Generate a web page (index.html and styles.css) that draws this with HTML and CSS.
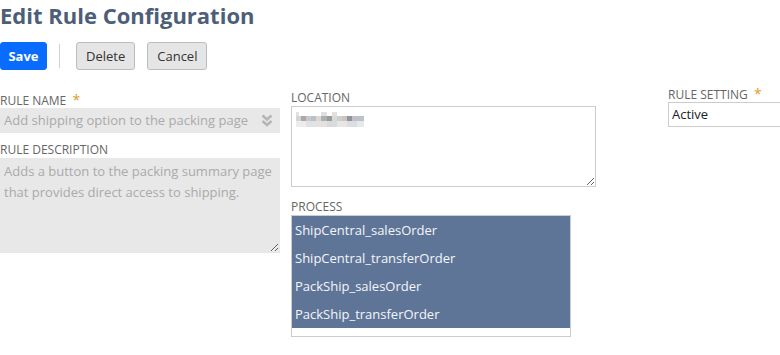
FILE: index.html
```html
<!DOCTYPE html>
<html>
<head>
<meta charset="utf-8">
<link rel="stylesheet" href="styles.css">
</head>
<body>
<h1 class="title">Edit Rule Configuration</h1>
<div class="toolbar">
  <button class="btn btn-primary">Save</button>
  <span class="sep"></span>
  <button class="btn">Delete</button>
  <button class="btn">Cancel</button>
</div>
<div class="form">
  <div class="col col1">
    <label class="lbl">RULE NAME <span class="req">*</span></label>
    <div class="input disabled">
      <span>Add shipping option to the packing page</span>
      <svg class="chev" width="12" height="13" viewBox="0 0 12 13"><path d="M1.5 1.5 L6 5.5 L10.5 1.5 M1.5 7 L6 11 L10.5 7" fill="none" stroke="#b5b5b5" stroke-width="2.6"/></svg>
    </div>
    <label class="lbl lbl-gap">RULE DESCRIPTION</label>
    <textarea class="textarea disabled" readonly>Adds a button to the packing summary page that provides direct access to shipping.</textarea>
  </div>
  <div class="col col2">
    <label class="lbl">LOCATION</label>
    <div class="loc">
      <span class="blur"></span>
    </div>
    <label class="lbl lbl-gap2">PROCESS</label>
    <div class="list">
      <div class="opt">ShipCentral_salesOrder</div>
      <div class="opt">ShipCentral_transferOrder</div>
      <div class="opt">PackShip_salesOrder</div>
      <div class="opt">PackShip_transferOrder</div>
    </div>
  </div>
  <div class="col col3">
    <label class="lbl">RULE SETTING <span class="req">*</span></label>
    <div class="input setting">Active</div>
  </div>
</div>
</body>
</html>
```
FILE: styles.css
```css
* { box-sizing: border-box; }
html, body { margin: 0; padding: 0; background: #fff; }
body {
  font-family: "Open Sans", "Liberation Sans", sans-serif;
  color: #333;
  width: 780px;
  height: 355px;
  overflow: hidden;
}
.title {
  margin: 0;
  font-size: 22px;
  font-weight: 700;
  color: #4d5e78;
  line-height: 30px;
}
.toolbar {
  display: flex;
  align-items: center;
  margin-top: 12px;
  height: 28px;
}
.btn {
  font-family: inherit;
  font-size: 13px;
  height: 28px;
  padding: 0 9px;
  border: 1px solid #bdbdbd;
  background: #e5e5e5;
  color: #333;
  border-radius: 3px;
  font-weight: 400;
  line-height: 26px;
  margin-right: 12px;
}
.btn-primary {
  background: #0a6cff;
  border-color: #0a6cff;
  color: #fff;
  font-weight: 700;
  width: 47px;
  padding: 0;
  margin-right: 12px;
}
.sep {
  width: 1px;
  height: 24px;
  background: #d0d0d0;
  margin-right: 16px;
}
.form {
  display: grid;
  grid-template-columns: 280px 305px 1fr;
  column-gap: 11px;
  margin-top: 16px;
  align-items: start;
}
.col1 { padding-top: 6px; }
.col2 { padding-top: 4px; }
.col3 { margin-left: 61px; }
.lbl {
  display: block;
  font-size: 12px;
  line-height: 16px;
  height: 16px;
  color: #666;
  text-transform: uppercase;
}
.req { color: #e39a2d; font-size: 14px; margin-left: 3px; }
.lbl-gap { margin-top: 9px; }
.lbl-gap2 { margin-top: 12px; }
.input {
  height: 25px;
  font-size: 13px;
  line-height: 23px;
  padding: 0 3px;
  border: 1px solid #ccc;
  display: flex;
  align-items: center;
}
.disabled {
  background: #e8e8e8;
  border-color: #e8e8e8;
  color: #aaa;
}
.input.disabled span { flex: 1; }
.chev { margin-right: 3px; }
.textarea {
  display: block;
  width: 280px;
  height: 95px;
  font-family: inherit;
  font-size: 13px;
  line-height: 21px;
  padding: 2px 3px;
  resize: vertical;
  margin: 0;
  outline: none;
}
.loc {
  width: 305px;
  height: 81px;
  border: 1px solid #ccc;
  resize: both;
  overflow: hidden;
  padding: 5px 4px;
}
.blur {
  display: block;
  width: 85px;
  height: 15px;
  background:
    linear-gradient(90deg, #d9d3d3 0 6%, #a7a9ad 6% 12%, #cfc6c8 12% 18%, #b9c1c6 18% 24%, #dcd6d4 24% 30%, #a9b1b4 30% 36%, #9d9a97 36% 42%, #d5dadd 42% 48%, #c9cfd2 48% 54%, #ccc4bd 54% 60%, #8f939c 60% 66%, #c4bec4 66% 72%, #b9c4ca 72% 80%, transparent 80%) 0 4px / 100% 5px no-repeat,
    linear-gradient(90deg, #ececec 0 12%, #dfe2e6 12% 24%, #e5e1df 24% 36%, #d8dbdd 36% 48%, #e8e6e3 48% 60%, #d9dee3 60% 72%, #e6e8ea 72% 80%, transparent 80%) 0 9px / 100% 6px no-repeat,
    linear-gradient(90deg, #e6e0e0 0 4%, transparent 4% 30%, #e0dede 30% 36%, transparent 36% 42%, #e3e0de 42% 48%, transparent 48%) 0 0 / 100% 4px no-repeat;
}
.list {
  width: 280px;
  height: 122px;
  border: 1px solid #ccc;
  background: #fff;
}
.opt {
  height: 28px;
  line-height: 28px;
  font-size: 13px;
  padding: 0 3px;
  background: #5f7598;
  color: #f4f6f9;
}
.setting {
  width: 120px;
  color: #222;
}
```
